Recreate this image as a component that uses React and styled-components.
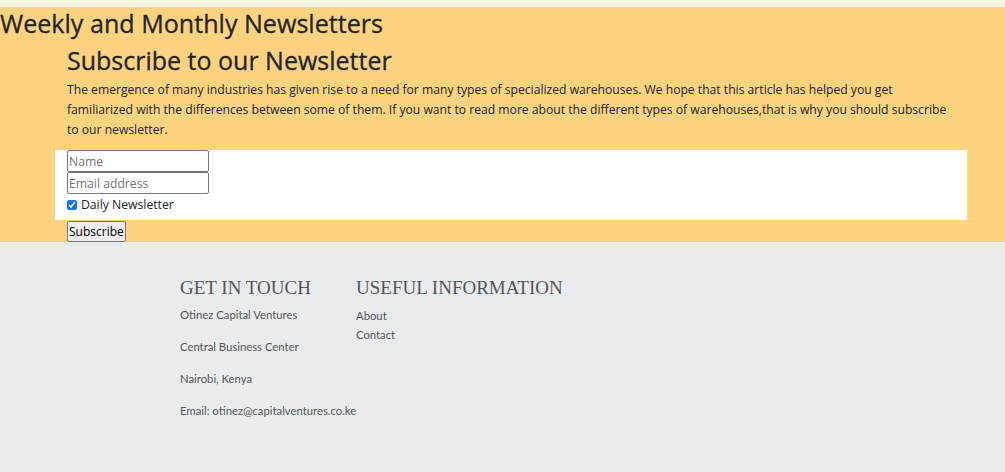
import React from "react";
import styled, { createGlobalStyle } from "styled-components";

export default function App() {
  return (
    <React.Fragment>
      <GlobalStyle />
      <TopStrip />
      <Newsletter>
        <Title>Weekly and Monthly Newsletters</Title>
        <Container>
          <Inner>
            <SubTitle>Subscribe to our Newsletter</SubTitle>
            <Lead>
              The emergence of many industries has given rise to a need for many
              types of specialized warehouses. We hope that this article has
              helped you get familiarized with the differences between some of
              them. If you want to read more about the different types of
              warehouses,that is why you should subscribe to our newsletter.
            </Lead>
          </Inner>
          <FormBox>
            <Field type="text" placeholder="Name" />
            <Field type="email" placeholder="Email address" />
            <CheckRow>
              <input type="checkbox" defaultChecked />
              Daily Newsletter
            </CheckRow>
          </FormBox>
          <Inner>
            <SubscribeButton>Subscribe</SubscribeButton>
          </Inner>
        </Container>
      </Newsletter>
      <Footer>
        <Column width="176px">
          <ColumnHeading>GET IN TOUCH</ColumnHeading>
          <Info>Otinez Capital Ventures</Info>
          <Info>Central Business Center</Info>
          <Info>Nairobi, Kenya</Info>
          <Info>Email: otinez@capitalventures.co.ke</Info>
        </Column>
        <Column width="auto">
          <ColumnHeading>USEFUL INFORMATION</ColumnHeading>
          <LinkList>
            <li>
              <FooterLink href="#">About</FooterLink>
            </li>
            <li>
              <FooterLink href="#">Contact</FooterLink>
            </li>
          </LinkList>
        </Column>
      </Footer>
    </React.Fragment>
  );
}

const GlobalStyle = createGlobalStyle`
  body {
    margin: 0;
    font-family: "Open Sans", "Noto Sans", sans-serif;
    color: #212529;
    background: #e9ecef;
  }
`;

const TopStrip = styled.div`
  height: 7px;
  background: #fdf3e4;
`;

const Newsletter = styled.section`
  background: #fed37f;
`;

const Title = styled.h1`
  margin: 0;
  padding-top: 1px;
  font-size: 25.1px;
  font-weight: 500;
  line-height: 30px;
  -webkit-text-stroke: 0.3px #212529;
`;

const Container = styled.div`
  width: 912px;
  margin-left: 55px;
`;

const Inner = styled.div`
  padding: 0 12px;
`;

const SubTitle = styled.h2`
  margin: 6px 0 4px;
  font-size: 25px;
  font-weight: 500;
  line-height: 32px;
  -webkit-text-stroke: 0.3px #212529;
`;

const Lead = styled.p`
  margin: 0 0 10px;
  font-size: 12.15px;
  line-height: 20px;
`;

const FormBox = styled.div`
  background: #ffffff;
  padding: 0 12px 5px;
  display: flex;
  flex-direction: column;
  align-items: flex-start;
`;

const Field = styled.input`
  width: 142px;
  height: 22px;
  box-sizing: border-box;
  border: 1px solid #767676;
  border-radius: 2px;
  padding: 1px 1px;
  font-family: "Open Sans", sans-serif;
  font-size: 12.2px;
  &::placeholder {
    color: #757575;
  }
`;

const CheckRow = styled.label`
  display: flex;
  align-items: center;
  font-size: 12.2px;
  line-height: 20px;
  margin-top: 1px;
  input {
    margin: 0 4px 0 0;
    width: 10px;
    height: 10px;
  }
`;

const SubscribeButton = styled.button`
  display: block;
  margin-top: 1px;
  height: 21px;
  padding: 0 1px;
  border: 1px solid #767676;
  border-radius: 2px;
  background: #efefef;
  font-family: "Open Sans", sans-serif;
  font-size: 12px;
  color: #000;
`;

const Footer = styled.footer`
  background: #e9ecef;
  min-height: 231px;
  display: flex;
  padding: 34px 0 40px 180px;
  box-sizing: border-box;
`;

const Column = styled.div`
  width: ${(p) => p.width};
  display: flex;
  flex-direction: column;
`;

const ColumnHeading = styled.h4`
  margin: 0 0 7px;
  font-family: "Liberation Serif", "DejaVu Serif", serif;
  font-weight: 400;
  font-size: 19px;
  line-height: 24px;
  color: #555;
  white-space: nowrap;
`;

const Info = styled.p`
  margin: 0 0 16px;
  font-family: Lato, sans-serif;
  font-size: 11.3px;
  line-height: 16px;
  color: #555;
  white-space: nowrap;
`;

const LinkList = styled.ul`
  list-style: none;
  margin: 0;
  padding: 0;
  li {
    line-height: 19px;
    margin-top: -1px;
  }
  li:first-child {
    margin-top: -2px;
  }
`;

const FooterLink = styled.a`
  font-family: Lato, sans-serif;
  font-size: 11.3px;
  color: #555;
  text-decoration: none;
`;
